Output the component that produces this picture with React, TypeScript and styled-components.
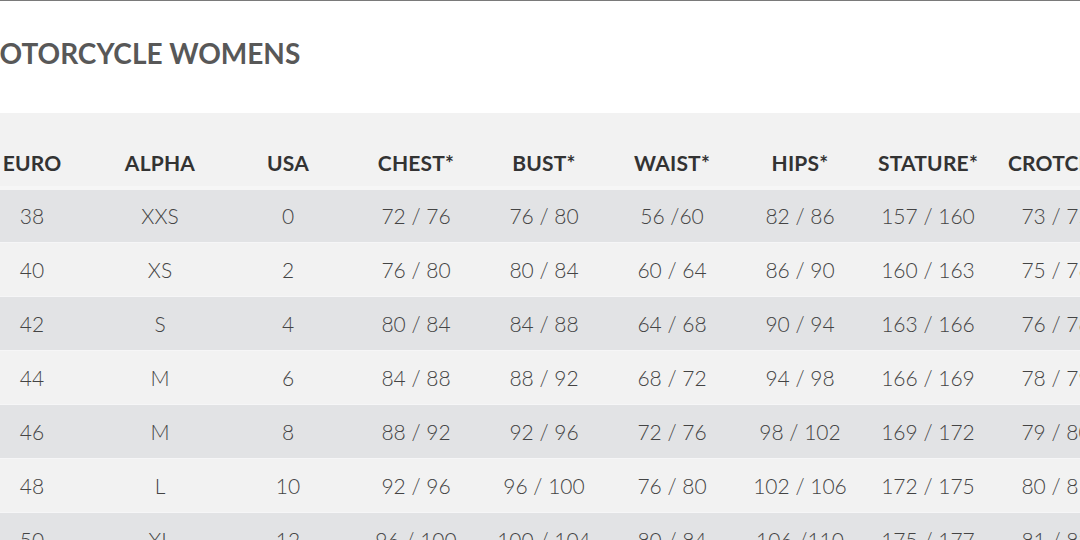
import React from 'react';
import styled, { createGlobalStyle } from 'styled-components';

const GlobalStyle = createGlobalStyle`
  html, body {
    margin: 0;
    padding: 0;
    background: #fff;
    overflow: hidden;
  }
  body {
    font-family: Lato, "Open Sans", sans-serif;
  }
`;

const Page = styled.div`
  width: 1080px;
  height: 540px;
  overflow: hidden;
  border-top: 1px solid #7a7a7a;
  box-sizing: border-box;
`;

const Shifted = styled.div`
  margin-left: -32px;
  width: 1152px;
`;

const Title = styled.h2`
  margin: 0;
  height: 112px;
  display: flex;
  align-items: center;
  padding: 0 0 8px 5px;
  box-sizing: border-box;
  font-size: 28px;
  font-weight: 700;
  color: #585858;
  letter-spacing: 0;
`;

const Table = styled.table`
  border-collapse: collapse;
  table-layout: fixed;
  width: 1152px;
`;

const HeadRow = styled.tr`
  background: #f2f2f2;
  height: 75px;
  border-bottom: 4px solid #f6f6f6;
`;

const Th = styled.th`
  width: 128px;
  padding: 26px 0 0;
  font-size: 21px;
  font-weight: 700;
  color: #333;
  text-align: center;
  white-space: nowrap;
  letter-spacing: 0.2px;
`;

const Row = styled.tr<{ $odd: boolean }>`
  height: 54px;
  background: ${(p) => (p.$odd ? '#e2e3e5' : '#f2f2f2')};
  border-top: 1px solid #f6f6f7;
`;

const Td = styled.td`
  padding: 0;
  font-size: 21px;
  font-weight: 300;
  color: #444;
  text-align: center;
  white-space: nowrap;
`;

const headers = ['EURO', 'ALPHA', 'USA', 'CHEST*', 'BUST*', 'WAIST*', 'HIPS*', 'STATURE*', 'CROTCH*'];

const rows = [
  ['38', 'XXS', '0', '72 / 76', '76 / 80', '56 /60', '82 / 86', '157 / 160', '73 / 75'],
  ['40', 'XS', '2', '76 / 80', '80 / 84', '60 / 64', '86 / 90', '160 / 163', '75 / 76'],
  ['42', 'S', '4', '80 / 84', '84 / 88', '64 / 68', '90 / 94', '163 / 166', '76 / 78'],
  ['44', 'M', '6', '84 / 88', '88 / 92', '68 / 72', '94 / 98', '166 / 169', '78 / 79'],
  ['46', 'M', '8', '88 / 92', '92 / 96', '72 / 76', '98 / 102', '169 / 172', '79 / 80'],
  ['48', 'L', '10', '92 / 96', '96 / 100', '76 / 80', '102 / 106', '172 / 175', '80 / 81'],
  ['50', 'XL', '12', '96 / 100', '100 / 104', '80 / 84', '106 /110', '175 / 177', '81 / 82'],
];

export default function App() {
  return (
    <>
      <GlobalStyle />
      <Page>
        <Shifted>
          <Title>MOTORCYCLE WOMENS</Title>
          <Table>
            <thead>
              <HeadRow>
                {headers.map((h) => (
                  <Th key={h}>{h}</Th>
                ))}
              </HeadRow>
            </thead>
            <tbody>
              {rows.map((r, i) => (
                <Row key={i} $odd={i % 2 === 0}>
                  {r.map((c, j) => (
                    <Td key={j}>{c}</Td>
                  ))}
                </Row>
              ))}
            </tbody>
          </Table>
        </Shifted>
      </Page>
    </>
  );
}
